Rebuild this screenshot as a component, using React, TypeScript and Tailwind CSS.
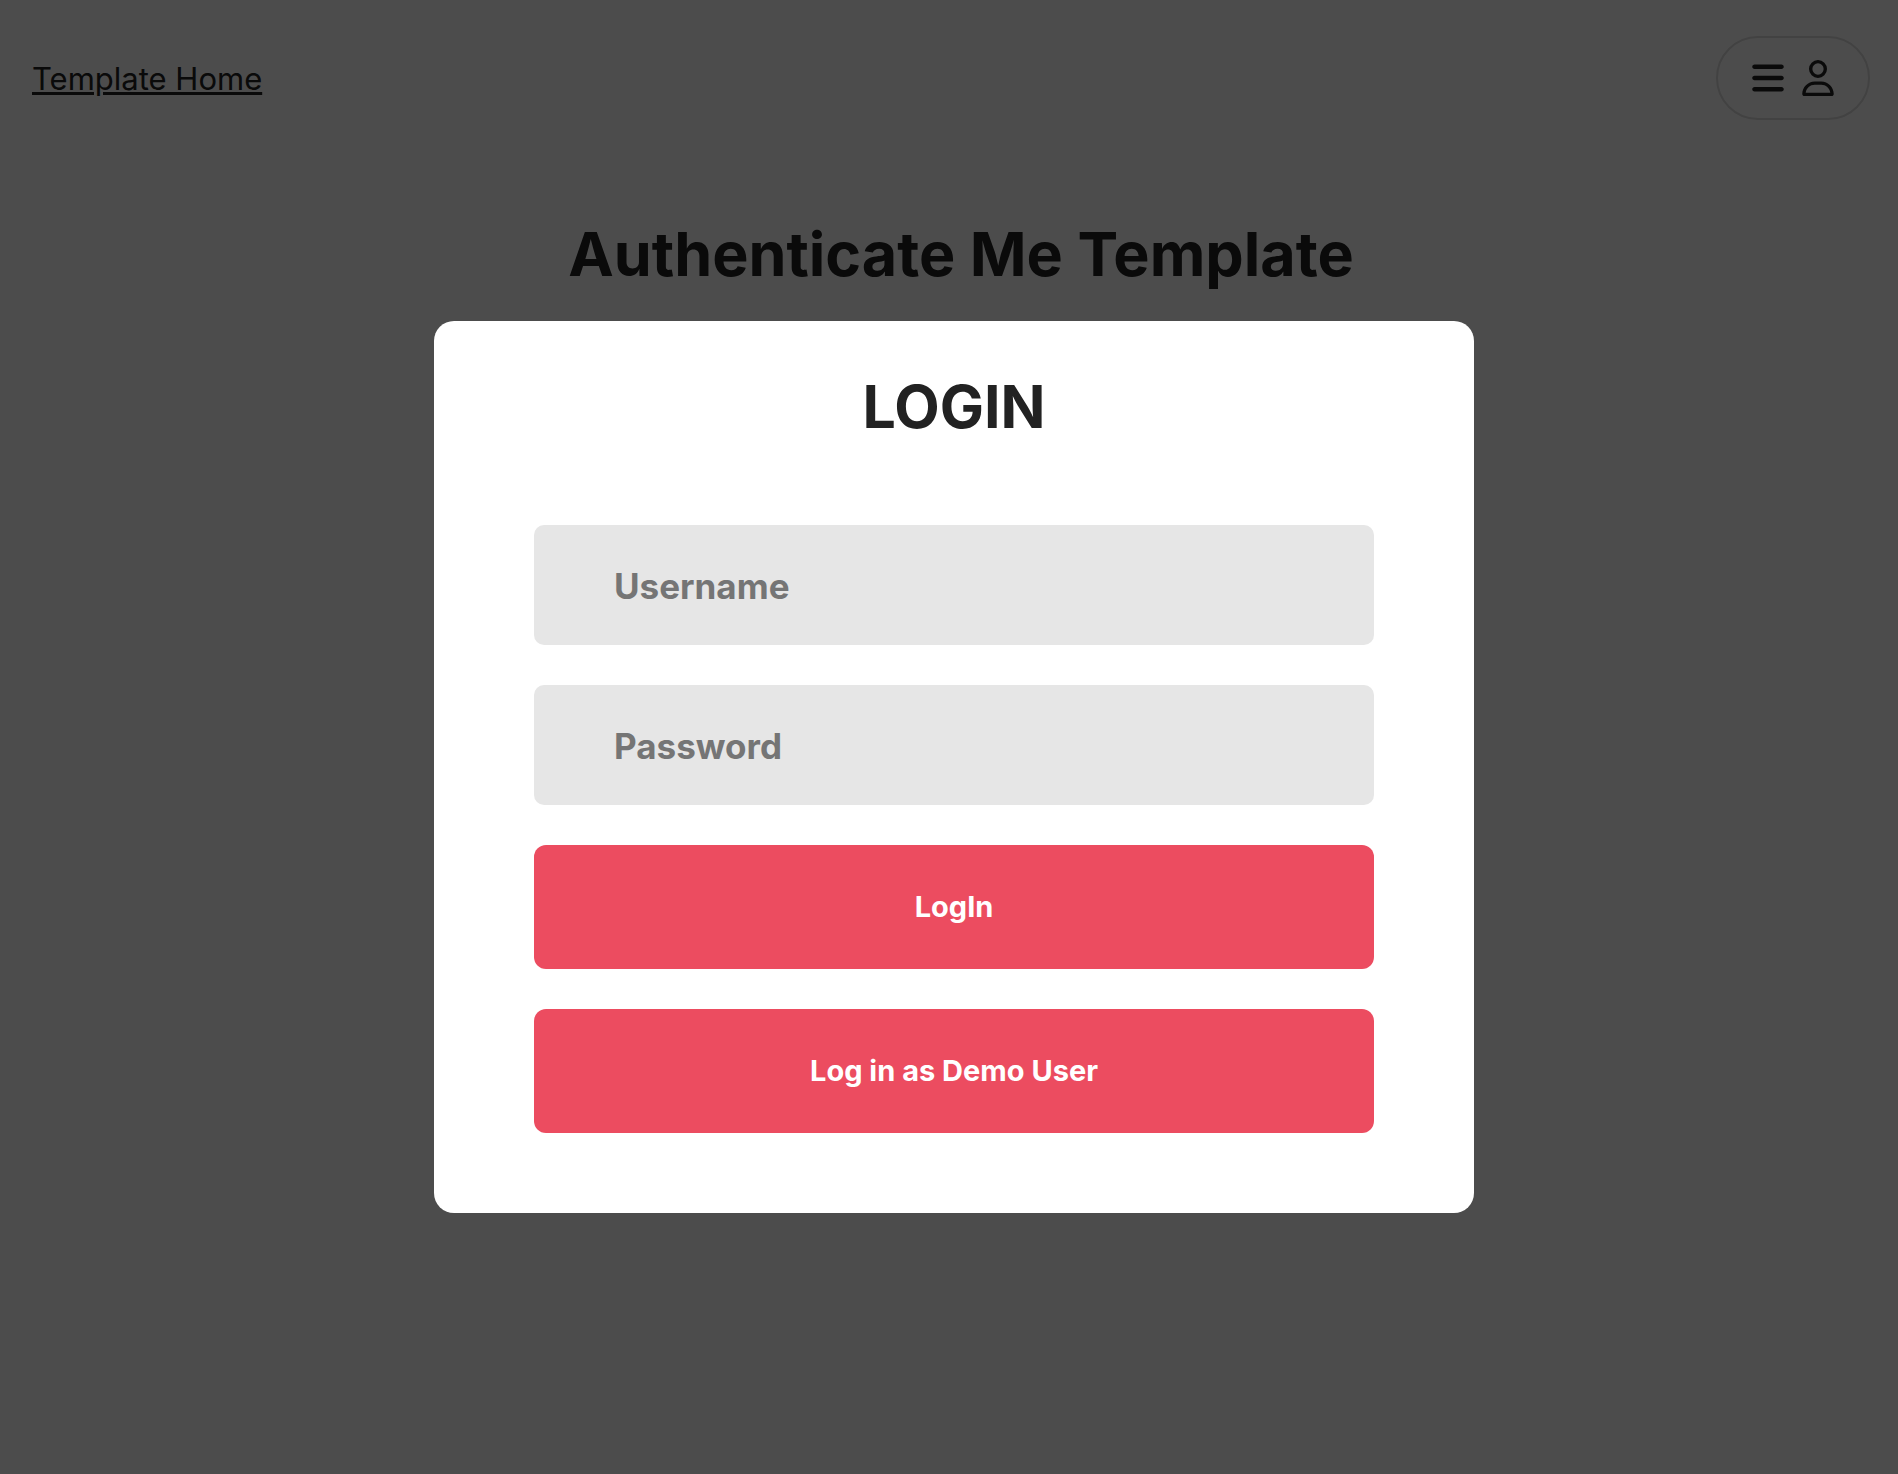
import { FaBars, FaRegUser } from "react-icons/fa6";

function Field({ name, label, type }: { name: string; label: string; type: string }) {
  return (
    <input
      name={name}
      type={type}
      aria-label={label}
      placeholder={label}
      className="block h-[120px] w-full rounded-[10px] bg-[#e6e6e6] px-20 pt-[2px] text-[35px] font-bold text-[#222222] outline-none placeholder:text-[#757575]"
    />
  );
}

function SubmitButton({ type, children }: { type: "submit" | "button"; children: string }) {
  return (
    <button
      type={type}
      className="h-[124px] w-full rounded-xl bg-[#ec4c60] text-[29px] font-bold text-white"
    >
      {children}
    </button>
  );
}

function LoginModal() {
  return (
    <div className="fixed inset-0 flex items-center justify-center bg-black/70 pt-15 pl-[10px]">
      <div
        role="dialog"
        aria-modal="true"
        aria-labelledby="login-title"
        className="w-full max-w-[1040px] rounded-[20px] bg-white px-[100px] pt-12 pb-20"
      >
        <h2 id="login-title" className="text-center text-[59px] leading-[76px] font-bold">
          LOGIN
        </h2>
        <form className="mt-20 flex flex-col gap-10">
          <Field name="username" label="Username" type="text" />
          <Field name="password" label="Password" type="password" />
          <SubmitButton type="submit">LogIn</SubmitButton>
          <SubmitButton type="button">Log in as Demo User</SubmitButton>
        </form>
      </div>
    </div>
  );
}

export default function App() {
  return (
    <div className="min-h-screen bg-white font-['Inter',sans-serif] text-[#222222]">
      <header className="flex items-center justify-between pt-9 pr-7 pl-8">
        <a href="#" className="pt-[2px] text-[31px] leading-10 underline">
          Template Home
        </a>
        <button
          type="button"
          aria-label="Open user menu"
          className="flex items-center gap-[14px] rounded-full border-2 border-[#dddddd] px-8 py-[22px] text-[36px]"
        >
          <FaBars />
          <FaRegUser />
        </button>
      </header>
      <main className="pt-24 pl-6">
        <h1 className="text-center text-[61px] leading-[76px] font-bold">Authenticate Me Template</h1>
      </main>
      <LoginModal />
    </div>
  );
}
